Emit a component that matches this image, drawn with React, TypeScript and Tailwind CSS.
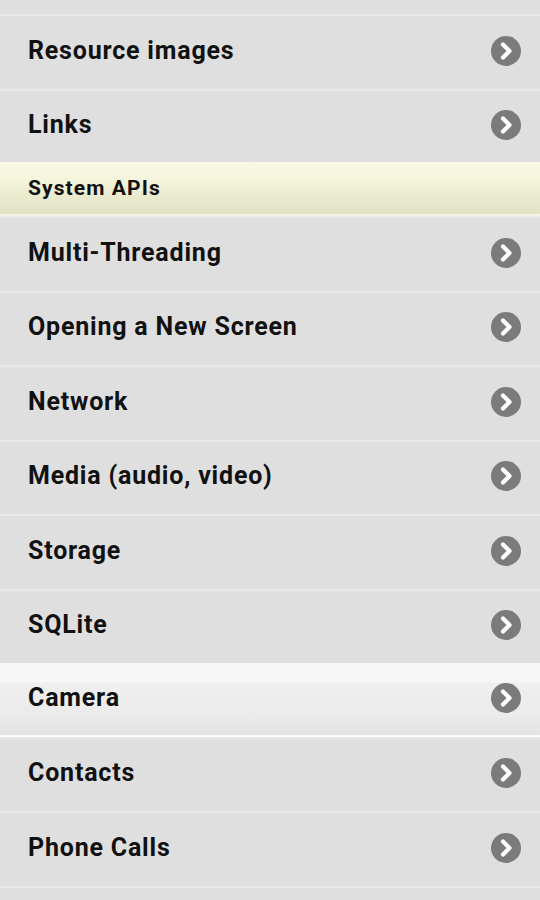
import React from "react";

const Chevron = () => (
  <svg width="32" height="32" viewBox="0 0 32 32" className="shrink-0">
    <circle cx="16" cy="16" r="15" fill="#7b7b7b" />
    <polyline
      points="13,9.5 19.5,16 13,22.5"
      fill="none"
      stroke="#ffffff"
      strokeWidth="4.2"
      strokeLinecap="round"
      strokeLinejoin="round"
    />
  </svg>
);

const Row = ({ label, h, active }: { label: string; h: string; active?: boolean }) => (
  <div
    className={
      active
        ? "flex items-center justify-between pl-[28px] pr-[18px] pb-[3px] border-b-2 border-[#fbfbfb] bg-[linear-gradient(to_bottom,#f7f7f7_0%,#f7f7f7_26%,#efefef_28%,#ebebeb_70%,#e4e4e4_100%)] " + h
        : "flex items-center justify-between pl-[28px] pr-[18px] pb-[4px] border-t-2 border-[#e8e8e8] " + h
    }
  >
    <span className="text-[25px] font-bold text-[#111] tracking-[0.8px]">{label}</span>
    <Chevron />
  </div>
);

export default function App() {
  const rows = [
    "Multi-Threading",
    "Opening a New Screen",
    "Network",
    "Media (audio, video)",
    "Storage",
    "SQLite",
  ];
  return (
    <div
      className="w-[540px] h-[900px] overflow-hidden bg-[#dfdfdf] flex flex-col"
      style={{ fontFamily: "Roboto, 'Noto Sans', sans-serif" }}
    >
      <div className="h-[14px] shrink-0" />
      <Row label="Resource images" h="h-[75px] shrink-0" />
      <Row label="Links" h="h-[73px] shrink-0" />
      <div className="h-[54px] shrink-0 flex items-center pl-[28px] border-t border-[#f8f8e6] border-b-2 border-b-[#f3f3e4] bg-[linear-gradient(to_bottom,#f8f8e2_0%,#f5f5dc_35%,#ebebd0_60%,#e2e2c6_100%)]">
        <span className="text-[21px] font-bold text-[#111] tracking-[1.1px]">System APIs</span>
      </div>
      {rows.map((r, i) => (
        <Row key={r} label={r} h={(i % 2 === 0 ? "h-[75px]" : "h-[74px]") + " shrink-0"} />
      ))}
      <Row label="Camera" h="h-[74px] shrink-0" active />
      <Row label="Contacts" h="h-[74px] shrink-0" />
      <Row label="Phone Calls" h="h-[75px] shrink-0" />
      <div className="h-[20px] shrink-0 border-t-2 border-[#e8e8e8]" />
    </div>
  );
}
